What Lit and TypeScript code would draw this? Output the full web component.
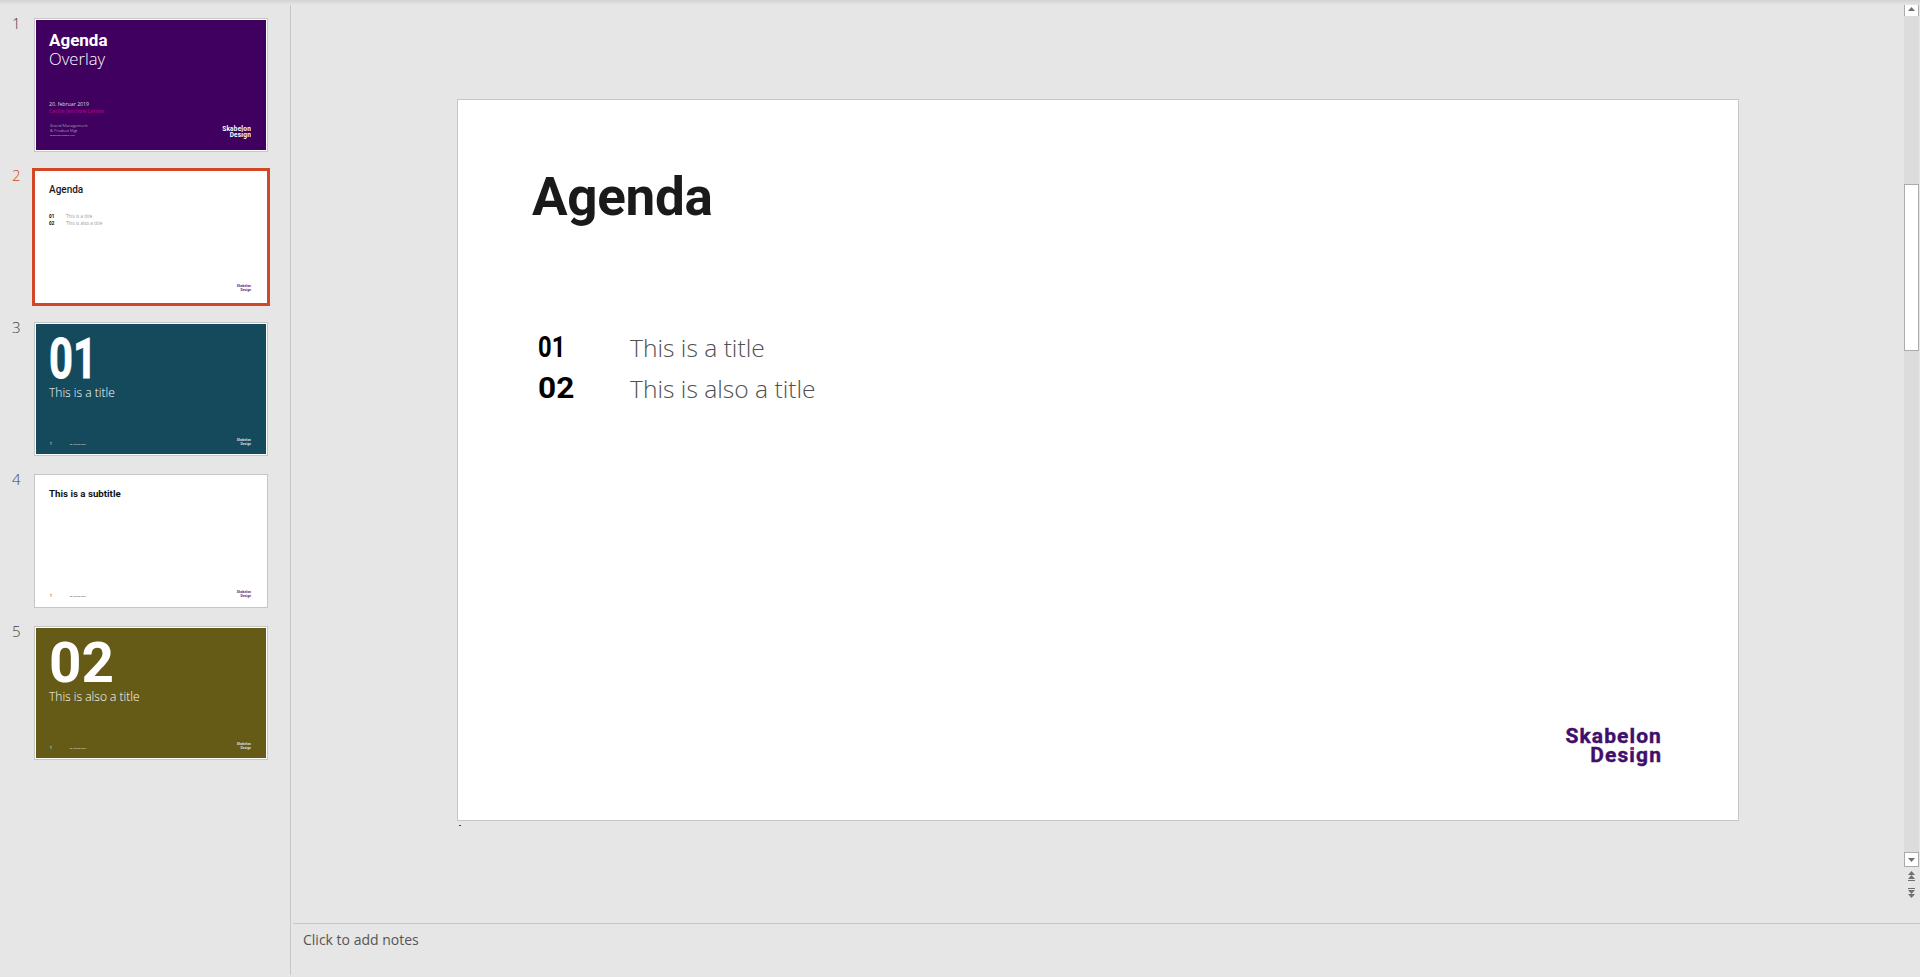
import { LitElement, html, css, svg } from "lit";
import { customElement } from "lit/decorators.js";

const arrow = (d: string) => html`<svg class="ico" viewBox="0 0 15 14" width="15" height="14">${svg`<path d=${d} fill="#707070"/>`}</svg>`;

@customElement("app-root")
export class AppRoot extends LitElement {
  static styles = css`
    :host { display: block; position: relative; width: 1920px; height: 977px; overflow: hidden; background: #e6e6e6; font-family: "Open Sans", sans-serif; }
    * { box-sizing: border-box; }
    .shade { position: absolute; left: 0; right: 0; top: 0; height: 5px; background: linear-gradient(#d3d3d3, #e6e6e6); }
    .app { display: flex; height: 977px; }
    .side { flex: none; width: 291px; height: 975px; border-right: 1px solid #c6c6c6; padding-top: 18px; display: flex; flex-direction: column; gap: 18px; }
    .row { display: flex; height: 134px; }
    .num { flex: none; width: 34px; padding-left: 12px; font-size: 15px; line-height: 20px; color: #444; font-weight: 300; margin-top: -5px; }
    .row.sel .num { color: #d24726; }
    .thumb { width: 234px; height: 134px; border: 1px solid #c6c6c6; padding: 1px; background: #fff; }
    .row.sel .thumb { width: 238px; height: 138px; margin: -2px; border: 3px solid #d24726; padding: 0; }
    .fill { position: relative; height: 100%; padding: 0 15px 0 13px; display: flex; flex-direction: column; color: #fff; overflow: hidden; }
    .row.sel .fill { padding-left: 14px; padding-right: 16px; }
    .purple { background: #400060; } .teal { background: #15495c; } .olive { background: #655a16; } .white { background: #fff; color: #111; }

    .t-head { font: 700 17px/17px Roboto, sans-serif; margin-top: 12px; }
    .t-over { font: 300 16.6px/20px "Open Sans", sans-serif; }
    .t-date { font: 400 5.2px/7px "Open Sans", sans-serif; margin-top: 32px; color: #ddd; }
    .t-name { font: 600 5px/7px "Open Sans", sans-serif; color: #b00080; }
    .t-mgmt { font: 300 4.2px/5px "Open Sans", sans-serif; color: #ccc; margin-top: 6px; padding-left: 1px; }
    .t-mini { font: 400 2.5px/5px "Open Sans", sans-serif; color: #ccc; padding-left: 1px; }
    .t-bottom { margin-top: auto; display: flex; justify-content: space-between; align-items: flex-end; padding-bottom: 12px; }
    .tlogo { font: 700 6.5px/6px Roboto, sans-serif; text-align: right; letter-spacing: .2px; }
    .tlogo.sm { font-size: 3.4px; line-height: 3.4px; letter-spacing: 0; }
    .tlogo.pur { color: #5b2a86; }
    .tlogo.sm.wh { color: #ddd; }
    .tiny { display: flex; gap: 18px; font: 600 2.1px/3px "Open Sans", sans-serif; padding-left: 1px; }
    .tiny span:first-child { font-size: 3px; font-weight: 700; }
    .t-bottom.low { padding-bottom: 8px; }
    .big { font: 700 55px/48px Roboto, sans-serif; margin-top: 11px; transform-origin: 0 50%; display: block; width: max-content; }
    .big.one { transform: scaleX(.76); -webkit-text-stroke: .8px #fff; }
    .big.two { transform: scaleX(1.03); }
    .t-title { font: 300 12px/16px "Open Sans", sans-serif; margin-top: 2px; }
    .t-sub { font: 700 9.7px/14px Roboto, sans-serif; margin-top: 11px; color: #111; }
    .t-agenda { font: 500 10px/12px Roboto, sans-serif; color: #1a1a1a; margin-top: 13px; }
    .t-list { margin-top: 17px; font-size: 4.6px; line-height: 7px; display: grid; grid-template-columns: 17px auto; justify-content: start; color: #999; }
    .t-list b { font: 700 4.6px/7px Roboto, sans-serif; color: #000; }

    .main { flex: 1; min-width: 0; margin-left: 2px; display: flex; flex-direction: column; }
    .edit { flex: none; height: 923px; display: flex; justify-content: space-between; padding-left: 164px; }
    .stage { padding-top: 99px; }
    .slide { width: 1282px; height: 722px; background: #fff; border: 1px solid #c6c6c6; padding: 0 76px 0 74px; display: flex; flex-direction: column; color: #1a1a1a; }
    .mark { width: 2px; height: 1px; margin: 4px 0 0 2px; background: #444; }
    h1 { margin: 66px 0 0; font: 700 53px/62px Roboto, sans-serif; color: #1a1a1a; letter-spacing: -.3px; }
    .list { margin-top: 99px; display: grid; grid-template-columns: 98px auto; justify-content: start; }
    .list .n, .list .l { height: 41px; line-height: 41px; }
    .n { padding-left: 6px; font: 700 29px/41px Roboto, sans-serif; color: #000; transform-origin: 6px 50%; }
    .n.one { transform: scaleX(.82); }
    .n.two { transform: scaleX(1.09); }
    .l { font: 300 24.6px/41px "Open Sans", sans-serif; color: #505050; }
    .logo { position: relative; margin-top: auto; margin-bottom: 55px; align-self: flex-end; text-align: right; font: 700 21px/19px Roboto, sans-serif; color: #3f0f6a; letter-spacing: 1.1px; -webkit-text-stroke: .4px #3f0f6a; }
    .dot { position: absolute; right: 28px; top: 20px; width: 3px; height: 3px; background: #e6007e; }

    .bar { flex: none; width: 15px; margin-right: 1px; padding-top: 2px; display: flex; flex-direction: column; }
    .btn { flex: none; height: 15px; background: #fff; border: 1px solid #ababab; display: block; line-height: 0; }
    .btn svg { margin: -0.5px 0 0 -1px; }
    .track { background: #dcdcdc; flex: none; height: 837px; padding-top: 168px; margin: -1px 0; }
    .knob { height: 167px; background: #fff; border: 1px solid #ababab; }
    .plain { height: 17px; line-height: 0; }
    .ico { display: block; }
    .gap { height: 2px; flex: none; }

    .notes { flex: none; height: 54px; border-top: 1px solid #c6c6c6; padding: 6px 0 0 10px; font-size: 14px; line-height: 20px; color: #555; }
  `;

  private thumbLogo(cls: string) {
    return html`<div class="tlogo sm ${cls}">Skabelon<br />Design</div>`;
  }

  private foot(color: string, cls: string) {
    return html`<div class="t-bottom low">
      <div class="tiny" style="color:${color}"><span>1</span><span>20. februar 2019</span></div>
      ${this.thumbLogo(cls)}
    </div>`;
  }

  private content(i: number) {
    if (i === 0)
      return html`<div class="fill purple">
        <div class="t-head">Agenda</div>
        <div class="t-over">Overlay</div>
        <div class="t-date">20. februar 2019</div>
        <div class="t-name">Cecilie Jenchow Larsen</div>
        <div class="t-bottom">
          <div><div class="t-mgmt">Brand Management<br />&amp; Product Mgt</div><div class="t-mini">Skabelon Design Mini</div></div>
          <div class="tlogo">Skabelon<br />Design</div>
        </div>
      </div>`;
    if (i === 1)
      return html`<div class="fill white">
        <div class="t-agenda">Agenda</div>
        <div class="t-list"><b>01</b><span>This is a title</span><b>02</b><span>This is also a title</span></div>
        <div class="t-bottom" style="padding-bottom:11px;justify-content:flex-end">${this.thumbLogo("pur")}</div>
      </div>`;
    if (i === 2)
      return html`<div class="fill teal"><span class="big one">01</span><div class="t-title">This is a title</div>${this.foot("#ddd", "wh")}</div>`;
    if (i === 3)
      return html`<div class="fill white"><div class="t-sub">This is a subtitle</div>${this.foot("#555", "pur")}</div>`;
    return html`<div class="fill olive"><span class="big two">02</span><div class="t-title">This is also a title</div>${this.foot("#ddd", "wh")}</div>`;
  }

  render() {
    return html`<div class="app">
        <div class="side">
          ${[0, 1, 2, 3, 4].map(
            (i) => html`<div class="row ${i === 1 ? "sel" : ""}">
              <div class="num">${i + 1}</div>
              <div class="thumb">${this.content(i)}</div>
            </div>`
          )}
        </div>
        <div class="main">
          <div class="edit">
            <div class="stage">
              <div class="slide">
                <h1>Agenda</h1>
                <div class="list">
                  <div class="n one">01</div><div class="l">This is a title</div>
                  <div class="n two">02</div><div class="l">This is also a title</div>
                </div>
                <div class="logo">Skabelon<br />Design<span class="dot"></span></div>
              </div>
              <div class="mark"></div>
            </div>
            <div class="bar">
              <div class="btn">${arrow("M7.5 4 L11 8 L4 8 Z")}</div>
              <div class="track"><div class="knob"></div></div>
              <div class="btn">${arrow("M4 5 L11 5 L7.5 9 Z")}</div>
              <div class="gap"></div>
              <div class="plain">${arrow("M7.5 2 L11 6 L4 6 Z M7.5 6 L11 10 L4 10 Z M4 11 H11 V12 H4 Z")}</div>
              <div class="plain">${arrow("M4 2 H11 V3 H4 Z M4 4 L11 4 L7.5 8 Z M4 8 L11 8 L7.5 12 Z")}</div>
            </div>
          </div>
          <div class="notes">Click to add notes</div>
        </div>
      </div>
      <div class="shade"></div>`;
  }
}
